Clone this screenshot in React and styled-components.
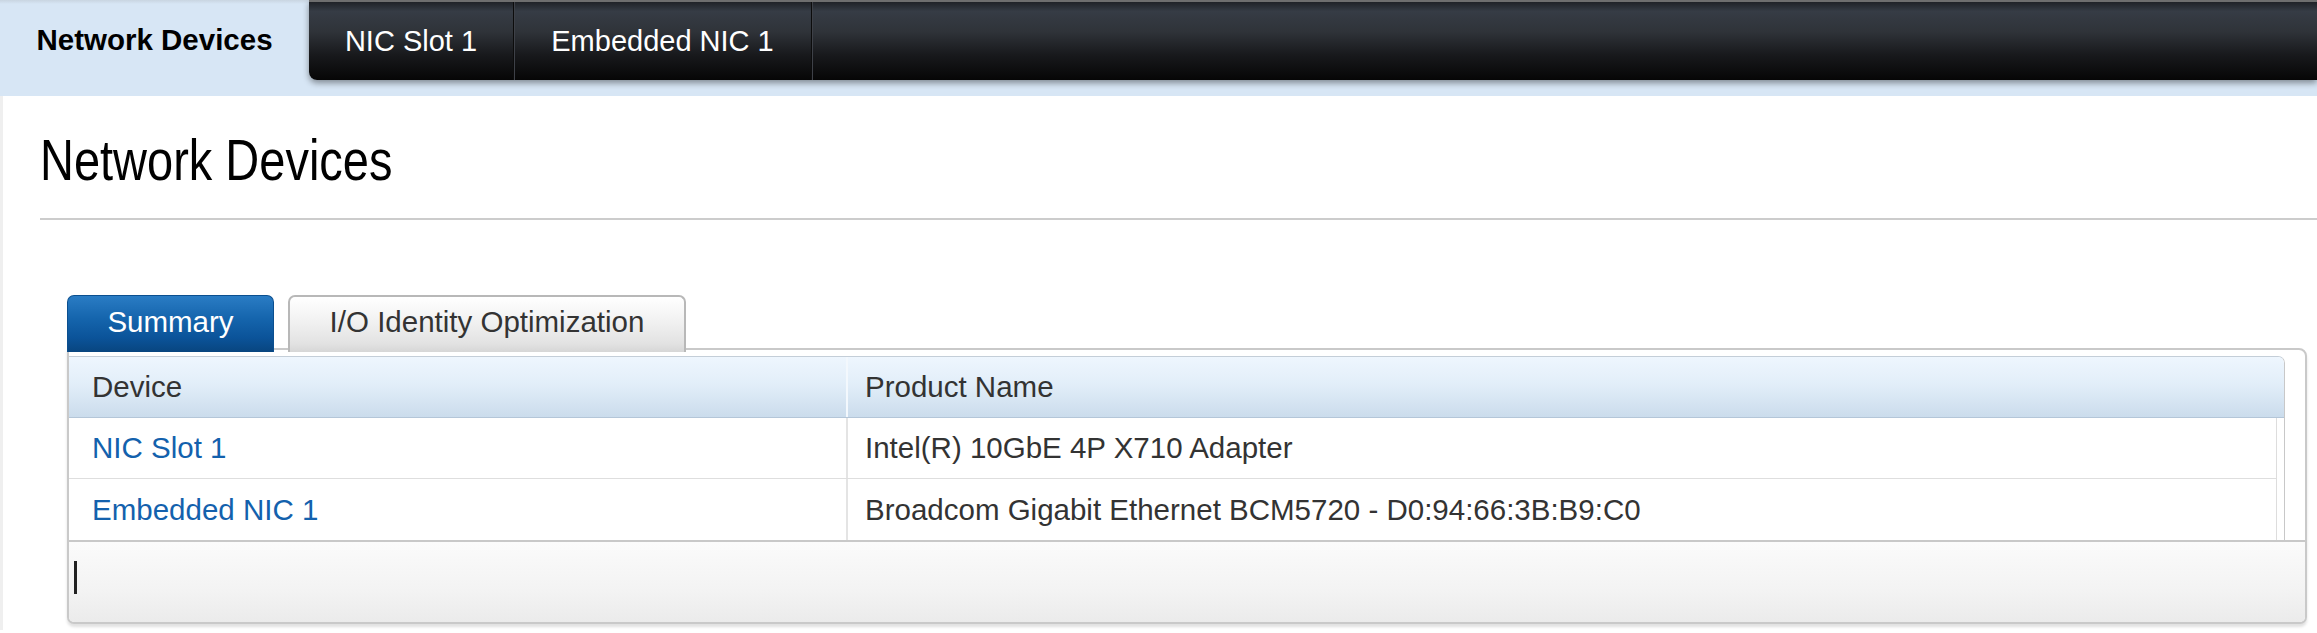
import React from 'react';
import styled, { createGlobalStyle } from 'styled-components';

const GlobalStyle = createGlobalStyle`
    html, body {
        margin: 0;
        padding: 0;
        background: #fff;
    }
    body {
        font-family: "Liberation Sans", Arial, sans-serif;
        color: #333;
    }
`;

const navTabs = [
    { label: 'NIC Slot 1', width: 204 },
    { label: 'Embedded NIC 1', width: 297 },
];

const rows = [
    { device: 'NIC Slot 1', product: 'Intel(R) 10GbE 4P X710 Adapter' },
    { device: 'Embedded NIC 1', product: 'Broadcom Gigabit Ethernet BCM5720 - D0:94:66:3B:B9:C0' },
];

function App() {
    return (
        <>
            <GlobalStyle />
            <Page>
                <TopNav>
                    <ActiveNavTab>Network Devices</ActiveNavTab>
                    <DarkBar>
                        {navTabs.map((tab) => (
                            <NavTab key={tab.label} width={tab.width}>
                                {tab.label}
                            </NavTab>
                        ))}
                    </DarkBar>
                </TopNav>
                <Main>
                    <TitleBlock>
                        <Title>Network Devices</Title>
                    </TitleBlock>
                    <TabArea>
                        <SubTabs>
                            <SubTab active width={207}>Summary</SubTab>
                            <SubTab width={398}>I/O Identity Optimization</SubTab>
                        </SubTabs>
                        <Panel>
                            <GridBox>
                                <HeaderRow>
                                    <HeaderCell>Device</HeaderCell>
                                    <HeaderCell second>Product Name</HeaderCell>
                                </HeaderRow>
                                <Body>
                                    {rows.map((row, i) => (
                                        <Row key={row.device} last={i === rows.length - 1}>
                                            <Cell>
                                                <DeviceLink>{row.device}</DeviceLink>
                                            </Cell>
                                            <Cell second>{row.product}</Cell>
                                        </Row>
                                    ))}
                                </Body>
                            </GridBox>
                            <Footer>
                                <Caret />
                            </Footer>
                        </Panel>
                    </TabArea>
                </Main>
            </Page>
        </>
    );
}

const Page = styled.div`
    width: 100%;
    min-height: 633px;
    background: #fff;
`;

const TopNav = styled.div`
    display: flex;
    align-items: flex-start;
    height: 96px;
    background: linear-gradient(to bottom, #c9d5e1 0px, #d7e6f5 4px, #d7e6f5 100%);
`;

const ActiveNavTab = styled.div`
    width: 309px;
    height: 80px;
    display: flex;
    align-items: center;
    justify-content: center;
    font-size: 29.5px;
    font-weight: 700;
    color: #000;
    cursor: default;
`;

const DarkBar = styled.div`
    flex: 1;
    display: flex;
    height: 80px;
    box-sizing: border-box;
    border-top: 2px solid #6e6e6e;
    border-bottom-left-radius: 8px;
    background: linear-gradient(
        to bottom,
        #1f2227 0%,
        #363c45 12%,
        #2f3339 38%,
        #18191c 68%,
        #060606 100%
    );
    box-shadow: 0 3px 6px rgba(0, 0, 0, 0.4);
`;

const NavTab = styled.div`
    width: ${(props) => props.width}px;
    height: 100%;
    display: flex;
    align-items: center;
    justify-content: center;
    font-size: 29px;
    color: #fff;
    border-right: 1px solid #0c0c0c;
    box-shadow: 1px 0 0 #3e4148;
    cursor: pointer;
`;

const Main = styled.div`
    border-left: 3px solid #efefef;
    padding-bottom: 6px;
`;

const TitleBlock = styled.div`
    margin-left: 37px;
    padding-top: 32px;
    padding-bottom: 26px;
    border-bottom: 2px solid #cccccc;
`;

// the page title uses a narrow face; no narrow font is installed, so squeeze the regular one
const Title = styled.div`
    display: inline-block;
    font-size: 58px;
    line-height: 64px;
    color: #000;
    transform: scaleX(0.81);
    transform-origin: left center;
`;

const TabArea = styled.div`
    margin: 75px 10px 0 64px;
`;

const SubTabs = styled.div`
    display: flex;
    gap: 14px;
    position: relative;
    z-index: 1;
`;

const SubTab = styled.div`
    width: ${(props) => props.width}px;
    height: 57px;
    box-sizing: border-box;
    display: flex;
    align-items: center;
    justify-content: center;
    padding-bottom: 5px;
    font-size: 29.5px;
    border-radius: 7px 7px 0 0;
    border: ${(props) => (props.active ? '1px solid #0b4f8f' : '2px solid #b8b8b8')};
    border-bottom: none;
    color: ${(props) => (props.active ? '#fff' : '#333')};
    background: ${(props) =>
        props.active
            ? 'linear-gradient(to bottom, #2a7cc4 0%, #1565ad 40%, #0b5399 75%, #08457f 100%)'
            : 'linear-gradient(to bottom, #ffffff 0%, #f1f1f1 45%, #e2e2e2 85%, #d6d6d6 100%)'};
    cursor: pointer;
`;

const Panel = styled.div`
    margin-top: -4px;
    border: 2px solid #c9c9c9;
    border-radius: 0 8px 7px 7px;
    padding-top: 6px;
    background: #fff;
    box-shadow: 0 3px 3px rgba(0, 0, 0, 0.12);
    overflow: hidden;
`;

const GridBox = styled.div`
    margin-right: 20px;
    border-top: 1px solid #c4ced8;
    border-right: 1px solid #c8c8c8;
    border-top-right-radius: 7px;
    overflow: hidden;
`;

const HeaderRow = styled.div`
    display: grid;
    grid-template-columns: 777px 1fr;
    height: 60px;
    border-bottom: 1px solid #b4c6d8;
    background: linear-gradient(to bottom, #eef6fe 0%, #e2eef9 45%, #cbdcec 100%);
`;

const HeaderCell = styled.div`
    display: flex;
    align-items: center;
    padding-left: ${(props) => (props.second ? '17px' : '23px')};
    border-left: ${(props) => (props.second ? '2px solid #f3f8fd' : 'none')};
    font-size: 29.5px;
    color: #333;
`;

const Body = styled.div`
    margin-right: 7px;
    border-right: 1px solid #dddddd;
`;

const Row = styled.div`
    display: grid;
    grid-template-columns: 777px 1fr;
    height: ${(props) => (props.last ? '61px' : '60px')};
    border-bottom: ${(props) => (props.last ? 'none' : '1px solid #dedede')};
`;

const Cell = styled.div`
    display: flex;
    align-items: center;
    padding-left: ${(props) => (props.second ? '17px' : '23px')};
    border-left: ${(props) => (props.second ? '2px solid #e4e4e4' : 'none')};
    font-size: 29.5px;
    color: #333;
`;

const DeviceLink = styled.a`
    color: #1361ad;
    text-decoration: none;
    cursor: pointer;
`;

const Footer = styled.div`
    height: 82px;
    box-sizing: border-box;
    border-top: 2px solid #c8c8c8;
    padding: 19px 0 0 5px;
    background: linear-gradient(to bottom, #fbfbfb 0%, #f3f3f3 60%, #ebebeb 100%);
`;

const Caret = styled.span`
    display: block;
    width: 3px;
    height: 33px;
    background: #222;
`;

export default App;
